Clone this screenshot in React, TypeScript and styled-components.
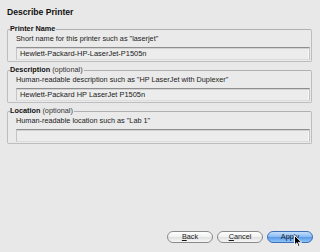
import styled, { createGlobalStyle } from "styled-components";

const GlobalStyle = createGlobalStyle`
  html, body {
    margin: 0;
    padding: 0;
    background: #e8e8e8;
  }
  body {
    font-family: "Liberation Sans", Arial, sans-serif;
    color: #1c1c1c;
  }
`;

const Dialog = styled.div`
  position: relative;
  width: 320px;
  height: 252px;
  box-sizing: border-box;
  padding: 7px 7px 9px 7px;
  display: flex;
  flex-direction: column;
  background: #e8e8e8;
  overflow: hidden;
`;

const Title = styled.h1`
  margin: 0 0 7px 0;
  font-size: 8.6px;
  line-height: 10px;
  font-weight: 700;
  color: #111;
`;

const Fields = styled.div`
  display: flex;
  flex-direction: column;
  gap: 3px;
`;

const Group = styled.fieldset`
  margin: 0 1px 0 0;
  padding: 0 1px 1px 8px;
  border: 1px solid #bdbdbd;
  border-top-color: #b0b0b0;
  border-radius: 2px;
  background: #eaeaea;
  display: flex;
  flex-direction: column;
  min-width: 0;
`;

const Legend = styled.legend`
  margin-left: -6px;
  padding: 0 1px 0 0;
  font-size: 7.3px;
  line-height: 10px;
  font-weight: 700;
  color: #111;
`;

const Optional = styled.span`
  font-weight: 400;
  color: #333;
`;

const Hint = styled.div`
  font-size: 7.3px;
  line-height: 9px;
  margin: 0 0 4px 0;
  color: #222;
`;

const TextField = styled.div`
  height: 11px;
  box-sizing: content-box;
  border: 1px solid #c4c4c4;
  border-top: 1px solid #8e8e8e;
  border-bottom-color: #dcdcdc;
  background: #ececec;
  box-shadow: inset 0 1px 0 #d2d2d2, inset -1px 0 0 #f8f8f8;
  padding: 0 3px;
  font-size: 7.45px;
  line-height: 11px;
  color: #1a1a1a;
  white-space: nowrap;
`;

const Footer = styled.div`
  margin-top: auto;
  display: flex;
  justify-content: flex-end;
  gap: 4px;
`;

const Button = styled.div<{ $primary?: boolean }>`
  width: 46px;
  height: 12px;
  box-sizing: border-box;
  border-radius: 7px;
  border: 1px solid ${(p) => (p.$primary ? "#3f6fb8" : "#8a8a8a")};
  background: ${(p) =>
    p.$primary
      ? "linear-gradient(#c4e0fb 0%, #8cbdf3 45%, #5c9ce8 55%, #8cc4f7 100%)"
      : "linear-gradient(#ffffff 0%, #f2f2f2 45%, #e2e2e2 55%, #f6f6f6 100%)"};
  display: flex;
  align-items: center;
  justify-content: center;
  font-size: 7.3px;
  line-height: 10px;
  color: #1a1a1a;
`;

const Cursor = styled.svg`
  position: absolute;
  left: 294px;
  top: 235px;
`;

export default function App() {
  return (
    <>
      <GlobalStyle />
      <Dialog>
        <Title>Describe Printer</Title>
        <Fields>
          <Group>
            <Legend>Printer Name</Legend>
            <Hint>Short name for this printer such as "laserjet"</Hint>
            <TextField>Hewlett-Packard-HP-LaserJet-P1505n</TextField>
          </Group>
          <Group>
            <Legend>
              Description <Optional>(optional)</Optional>
            </Legend>
            <Hint>Human-readable description such as "HP LaserJet with Duplexer"</Hint>
            <TextField>Hewlett-Packard HP LaserJet P1505n</TextField>
          </Group>
          <Group>
            <Legend>
              Location <Optional>(optional)</Optional>
            </Legend>
            <Hint>Human-readable location such as "Lab 1"</Hint>
            <TextField />
          </Group>
        </Fields>
        <Footer>
          <Button>
            <u>B</u>ack
          </Button>
          <Button>
            <u>C</u>ancel
          </Button>
          <Button $primary>Apply</Button>
        </Footer>
        <Cursor width="9" height="13" viewBox="0 0 9 13">
          <path
            d="M0.5 0.5 L0.5 10 L2.8 7.8 L4.4 11.6 L5.9 11 L4.4 7.3 L7.6 7.3 Z"
            fill="#000"
            stroke="#fff"
            strokeWidth="0.9"
            strokeLinejoin="round"
          />
        </Cursor>
      </Dialog>
    </>
  );
}
